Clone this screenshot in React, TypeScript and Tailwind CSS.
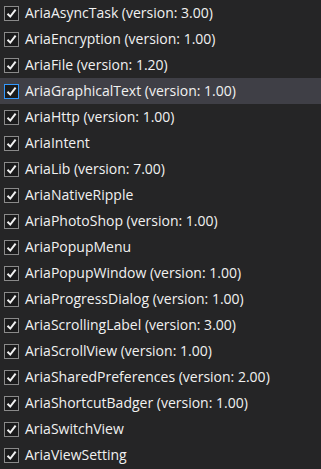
const items: string[] = [
  "AriaAsyncTask (version: 3.00)",
  "AriaEncryption (version: 1.00)",
  "AriaFile (version: 1.20)",
  "AriaGraphicalText (version: 1.00)",
  "AriaHttp (version: 1.00)",
  "AriaIntent",
  "AriaLib (version: 7.00)",
  "AriaNativeRipple",
  "AriaPhotoShop (version: 1.00)",
  "AriaPopupMenu",
  "AriaPopupWindow (version: 1.00)",
  "AriaProgressDialog (version: 1.00)",
  "AriaScrollingLabel (version: 3.00)",
  "AriaScrollView (version: 1.00)",
  "AriaSharedPreferences (version: 2.00)",
  "AriaShortcutBadger (version: 1.00)",
  "AriaSwitchView",
  "AriaViewSetting",
];

function Check({ active }: { active: boolean }) {
  return (
    <div
      className={
        "w-[15px] h-[15px] flex items-center justify-center border bg-[#1b1b1c] " +
        (active ? "border-[#3399ff]" : "border-[#8a8a8a]")
      }
    >
      <svg width="11" height="11" viewBox="0 0 11 11">
        <path d="M1.5 5.8 L4.3 8.6 L9.6 1.6" fill="none" stroke="#f1f1f1" strokeWidth="2" />
      </svg>
    </div>
  );
}

export default function App() {
  return (
    <div
      className="w-[321px] h-[469px] bg-[#252526] overflow-hidden"
      style={{ fontFamily: '"Open Sans", "Noto Sans", sans-serif' }}
    >
      {items.map((name, i) => (
        <div
          key={name}
          className={
            "h-[26px] flex items-center gap-[6px] pl-[4px] " +
            (i === 3 ? "bg-[#3f3f46]" : "")
          }
        >
          <Check active={i === 3} />
          <span className="text-[14px] text-[#f1f1f1] leading-none">{name}</span>
        </div>
      ))}
    </div>
  );
}
